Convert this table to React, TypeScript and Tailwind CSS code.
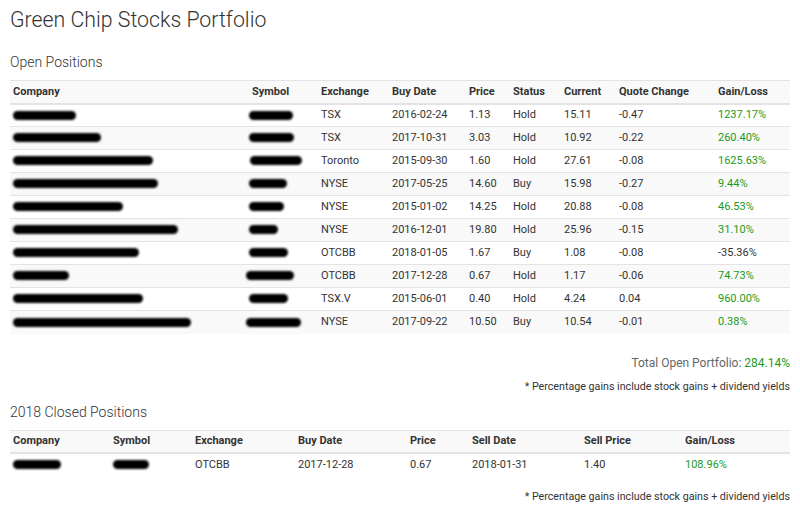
import React from 'react';

// redacted names are drawn as blurred black blobs, as in the screenshot
type Position = {
  company: number;
  symbol: number;
  symbolOffset?: number;
  exchange: string;
  buyDate: string;
  price: string;
  status: string;
  current: string;
  quoteChange: string;
  gain: string;
};

const openPositions: Position[] = [
  { company: 63, symbol: 44, exchange: 'TSX', buyDate: '2016-02-24', price: '1.13', status: 'Hold', current: '15.11', quoteChange: '-0.47', gain: '1237.17%' },
  { company: 88, symbol: 45, exchange: 'TSX', buyDate: '2017-10-31', price: '3.03', status: 'Hold', current: '10.92', quoteChange: '-0.22', gain: '260.40%' },
  { company: 140, symbol: 52, symbolOffset: 1, exchange: 'Toronto', buyDate: '2015-09-30', price: '1.60', status: 'Hold', current: '27.61', quoteChange: '-0.08', gain: '1625.63%' },
  { company: 145, symbol: 38, exchange: 'NYSE', buyDate: '2017-05-25', price: '14.60', status: 'Buy', current: '15.98', quoteChange: '-0.27', gain: '9.44%' },
  { company: 110, symbol: 35, exchange: 'NYSE', buyDate: '2015-01-02', price: '14.25', status: 'Hold', current: '20.88', quoteChange: '-0.08', gain: '46.53%' },
  { company: 165, symbol: 29, exchange: 'NYSE', buyDate: '2016-12-01', price: '19.80', status: 'Hold', current: '25.96', quoteChange: '-0.15', gain: '31.10%' },
  { company: 126, symbol: 39, exchange: 'OTCBB', buyDate: '2018-01-05', price: '1.67', status: 'Buy', current: '1.08', quoteChange: '-0.08', gain: '-35.36%' },
  { company: 56, symbol: 48, symbolOffset: -3, exchange: 'OTCBB', buyDate: '2017-12-28', price: '0.67', status: 'Hold', current: '1.17', quoteChange: '-0.06', gain: '74.73%' },
  { company: 130, symbol: 39, exchange: 'TSX.V', buyDate: '2015-06-01', price: '0.40', status: 'Hold', current: '4.24', quoteChange: '0.04', gain: '960.00%' },
  { company: 178, symbol: 55, symbolOffset: -3, exchange: 'NYSE', buyDate: '2017-09-22', price: '10.50', status: 'Buy', current: '10.54', quoteChange: '-0.01', gain: '0.38%' },
];

function Blob({ width, offset = 0 }: { width: number; offset?: number }) {
  return (
    <span
      className="inline-block h-[9px] rounded-full bg-black blur-[1px] align-middle"
      style={{ width, marginLeft: offset }}
    />
  );
}

function Gain({ value }: { value: string }) {
  const negative = value.startsWith('-');
  return <span className={negative ? 'text-[#333]' : 'text-[#1c9a1c]'}>{value}</span>;
}

const th = 'pl-[3px] text-left font-bold';
const td = 'pl-[3px]';

export default function App() {
  return (
    <div className="min-h-screen bg-white px-[10px] text-[#333]" style={{ fontFamily: 'Roboto, "Liberation Sans", sans-serif' }}>
      <h1 className="pt-[1px] text-[21.3px] font-light leading-[38px] text-[#333]">Green Chip Stocks Portfolio</h1>

      {/* Open positions */}
      <h2 className="mt-[13px] text-[14px] font-light leading-[20px]">Open Positions</h2>
      <table className="mt-[8px] w-full border-collapse text-[11px]">
        <colgroup>
          <col className="w-[239px]" />
          <col className="w-[69px]" />
          <col className="w-[71px]" />
          <col className="w-[77px]" />
          <col className="w-[44px]" />
          <col className="w-[51px]" />
          <col className="w-[55px]" />
          <col className="w-[99px]" />
          <col />
        </colgroup>
        <thead>
          <tr className="h-[23px] border-t border-b-2 border-[#e3e3e3] bg-[#f9f9f9]">
            <th className={th}>Company</th>
            <th className={th}>Symbol</th>
            <th className={th}>Exchange</th>
            <th className={th}>Buy Date</th>
            <th className={th}>Price</th>
            <th className={th}>Status</th>
            <th className={th}>Current</th>
            <th className={th}>Quote Change</th>
            <th className={th}>Gain/Loss</th>
          </tr>
        </thead>
        <tbody>
          {openPositions.map((p, i) => (
            <tr key={i} className={`h-[23px] border-t border-[#e3e3e3] ${i % 2 === 1 ? 'bg-[#f9f9f9]' : 'bg-white'}`}>
              <td className={td}><Blob width={p.company} /></td>
              <td className="pl-[0px]"><Blob width={p.symbol} offset={p.symbolOffset} /></td>
              <td className={td}>{p.exchange}</td>
              <td className={td}>{p.buyDate}</td>
              <td className={td}>{p.price}</td>
              <td className={td}>{p.status}</td>
              <td className={td}>{p.current}</td>
              <td className={td}>{p.quoteChange}</td>
              <td className={td}><Gain value={p.gain} /></td>
            </tr>
          ))}
        </tbody>
      </table>

      <div className="mt-[20px] text-right text-[12px] leading-[18px] text-[#666]">
        Total Open Portfolio: <span className="text-[#1c9a1c]">284.14%</span>
      </div>
      <div className="mt-[6px] text-right text-[10.7px] leading-[18px]">* Percentage gains include stock gains + dividend yields</div>

      {/* Closed positions */}
      <h2 className="mt-[6px] text-[14px] font-light leading-[20px]">2018 Closed Positions</h2>
      <table className="mt-[8px] w-full border-collapse text-[11px]">
        <colgroup>
          <col className="w-[100px]" />
          <col className="w-[82px]" />
          <col className="w-[103px]" />
          <col className="w-[112px]" />
          <col className="w-[62px]" />
          <col className="w-[112px]" />
          <col className="w-[101px]" />
          <col />
        </colgroup>
        <thead>
          <tr className="h-[23px] border-t border-b-2 border-[#e3e3e3] bg-[#f9f9f9]">
            <th className={th}>Company</th>
            <th className={th}>Symbol</th>
            <th className={th}>Exchange</th>
            <th className={th}>Buy Date</th>
            <th className={th}>Price</th>
            <th className={th}>Sell Date</th>
            <th className={th}>Sell Price</th>
            <th className={th}>Gain/Loss</th>
          </tr>
        </thead>
        <tbody>
          <tr className="h-[23px] bg-white">
            <td className={td}><Blob width={48} /></td>
            <td className={td}><Blob width={36} /></td>
            <td className={td}>OTCBB</td>
            <td className={td}>2017-12-28</td>
            <td className={td}>0.67</td>
            <td className={td}>2018-01-31</td>
            <td className={td}>1.40</td>
            <td className={td}><Gain value="108.96%" /></td>
          </tr>
        </tbody>
      </table>
      <div className="mt-[12px] text-right text-[10.7px] leading-[18px]">* Percentage gains include stock gains + dividend yields</div>
    </div>
  );
}
